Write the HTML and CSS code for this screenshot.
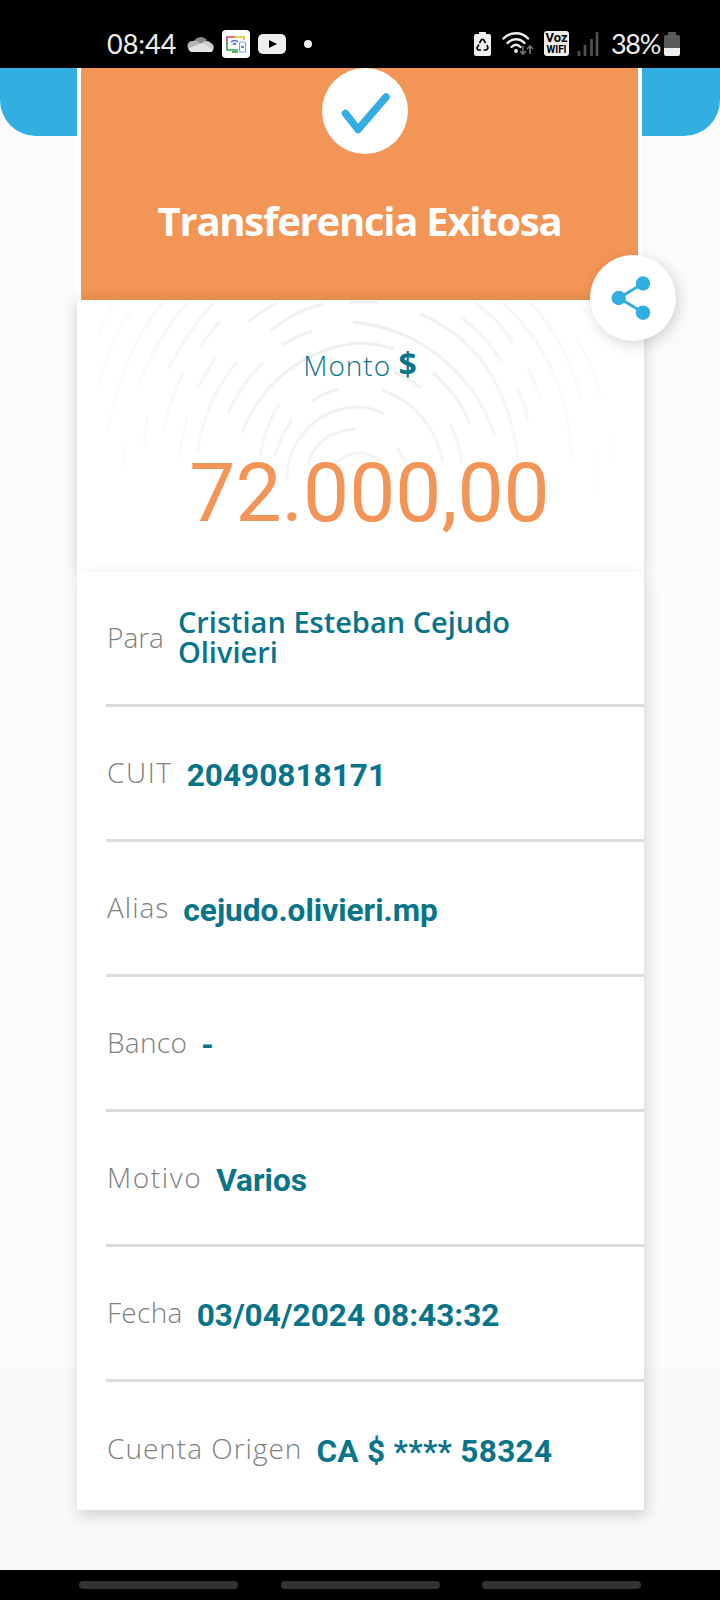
FILE: index.html
```
<!DOCTYPE html>
<html lang="es">
<head>
    <meta charset="UTF-8">
    <meta name="viewport" content="width=device-width, initial-scale=1.0">
    <title>Transferencia Exitosa</title>
    <link rel="stylesheet" href="styles.css">
</head>
<body>
    <div class="status-bar">
        <div class="status-left">
            <span class="clock">08:44</span>
            <svg class="ic-cloud" width="28" height="18" viewBox="0 0 28 18">
                <path d="M7 13a7 7 0 0 1 0-7A8 8 0 0 1 20 5l-5 5z" fill="#8b8b8b"/>
                <path d="M5 16a5 5 0 0 1 1-10c3-1 6 0 8 3l4 6z" fill="#b5b5b5"/>
                <path d="M15 8a6 6 0 0 1 9 0 5 5 0 0 1 0 9h-9z" fill="#cfcfcf"/>
                <path d="M4 17c-2-1-3-3-2-4l13-5 11 7c-1 2-2 2-4 2z" fill="#e4e4e4"/>
            </svg>
            <svg class="ic-cast" width="28" height="28" viewBox="0 0 28 28">
                <rect width="28" height="28" rx="4" fill="#fff"/>
                <g fill="none" stroke-width="1.7">
                    <path d="M5 14V7h8" stroke="#d9406a"/>
                    <path d="M12 7h10v3" stroke="#e8b52c"/>
                    <path d="M5 12v8h11" stroke="#35a853"/>
                    <path d="M10 22h6" stroke="#35a853"/>
                    <path d="M9 12c2-2 5-2 7 0M11 14.500c1-1 2-1 3 0" stroke="#4277d8"/>
                    <rect x="17.500" y="12" width="6" height="10" rx="1" stroke="#7aa5e6" stroke-width="1.200"/>
                    <path d="M19 17h3" stroke="#3f72d6"/>
                </g>
            </svg>
            <svg class="ic-video" width="28" height="20" viewBox="0 0 28 20">
                <rect width="28" height="20" rx="5" fill="#eee"/>
                <path d="M11 6l8 4-8 4z" fill="#000"/>
            </svg>
            <span class="dot"></span>
        </div>
        <div class="status-right">
            <svg width="17" height="24" viewBox="0 0 17 24">
                <path d="M5 0h7v2h3a2 2 0 0 1 2 2v18a2 2 0 0 1-2 2H2a2 2 0 0 1-2-2V4a2 2 0 0 1 2-2h3z" fill="#eee"/>
                <path d="M5.500 11l2-3.500h2l2 3.500M13 13l1 3-1.500 2h-3M7 18H4l-1.200-2L5 12.500" fill="none" stroke="#000" stroke-width="1.600"/>
            </svg>
            <svg class="ic-wifi" width="32" height="24" viewBox="0 0 32 24">
                <g fill="none" stroke="#eee" stroke-width="2.400" stroke-linecap="round">
                    <path d="M1.500 6.500C8-.5 20-.5 26 6.500"/>
                    <path d="M5.500 11c5-5 12-5 17 0"/>
                    <path d="M9.500 15c3-3 6-3 9 0"/>
                </g>
                <circle cx="14" cy="19" r="1.900" fill="#eee"/>
                <path d="M21 14v8m-3-3l3 3 3-3M28 22v-8m-3 3l3-3 3 3" fill="none" stroke="#777" stroke-width="1.600"/>
            </svg>
            <span class="voz">Voz<small>WIFI</small></span>
            <svg class="ic-signal" width="22" height="24" viewBox="0 0 22 24">
                <path d="M2 24v-5M8 24V13M14.500 24V7M20 24V0" fill="none" stroke="#505050" stroke-width="2.800"/>
            </svg>
            <span class="percent">38%</span>
            <svg width="16" height="24" viewBox="0 0 16 24">
                <path d="M4 0h8v3h2a2 2 0 0 1 2 2v11H0V5a2 2 0 0 1 2-2h2z" fill="#5a5a5a"/>
                <path d="M0 16h16v6a2 2 0 0 1-2 2H2a2 2 0 0 1-2-2z" fill="#eee"/>
            </svg>
        </div>
    </div>

    <div class="screen">
        <div class="top-bar"></div>

        <div class="ticket">
            <div class="ticket-header">
                <div class="check">
                    <svg width="86" height="86" viewBox="0 0 86 86">
                        <path d="M23.500 45.500L36 61.500 64 29" fill="none" stroke="#33aee0" stroke-width="7.500" stroke-linecap="round" stroke-linejoin="round"/>
                    </svg>
                </div>
                <h1>Transferencia Exitosa</h1>
            </div>

            <div class="amount-card">
                <!-- huella de fondo -->
                <svg class="fingerprint" width="567" height="272" viewBox="77 300 567 272">
                    <defs>
                        <radialGradient id="huella" gradientUnits="userSpaceOnUse" cx="358" cy="335" r="270">
                            <stop offset="0" stop-color="#eee"/>
                            <stop offset="0.350" stop-color="#f2f2f2"/>
                            <stop offset="0.700" stop-color="#f8f8f8"/>
                            <stop offset="1" stop-color="#fdfdfd"/>
                        </radialGradient>
                    </defs>
                    <g fill="none" stroke="url(#huella)" stroke-width="3">
                        <path d="M98 335Q105 318 115 303M99 390Q106 345 130 313M108 432Q118 360 162 303M138 387Q155 340 187 303M168 370Q187 332 213 303"/>
                        <path d="M200 346L220 321M164 430Q170 400 183 373M144 446L147 416M122 470L125 445M178 460L187 418M198 387L215 358"/>
                        <path d="M197 453Q205 400 237 362M228 413Q241 385 263 362M260 457Q264 428 279 404M275 457Q280 435 292 420"/>
                        <path d="M248 322Q262 311 277 303M271 330Q295 311 323 304M283 345Q296 336 312 331M349 302H378"/>
                        <path d="M242 433A138 138 0 0 1 357 343Q377 343 394 349M353 322A165 165 0 0 1 495 437"/>
                        <path d="M287 480A72 72 0 0 1 357 407Q371 407 384 414M308 463Q318 432 356 429M327 477A34 34 0 0 1 382 462M312 401Q325 392 339 389"/>
                        <path d="M382 390Q432 408 443 463M397 448L406 462M450 425Q460 444 462 464M394 372Q408 378 421 388M433 373Q458 395 470 423"/>
                        <path d="M420 314Q505 350 518 460M461 317Q485 335 502 362M475 303Q500 320 513 343M503 303Q570 365 571 460M531 303Q568 345 580 396"/>
                        <path d="M577 340Q596 370 600 397M528 368L542 399M517 387Q526 405 528 421M580 303L590 318M608 432Q612 450 611 465M594 450V495"/>
                    </g>
                </svg>
                <p class="monto">Monto <b>$</b></p>
                <p class="amount">72.000,00</p>
                <button class="share" aria-label="Compartir">
                    <svg width="40" height="46" viewBox="0 0 40 46">
                        <path d="M30 8.500L6 23 30 37.500" fill="none" stroke="#33aee0" stroke-width="3"/>
                        <g fill="#33aee0">
                            <circle cx="30" cy="8.500" r="7.200"/>
                            <circle cx="5.700" cy="23" r="7.200"/>
                            <circle cx="30" cy="37.700" r="7.200"/>
                        </g>
                    </svg>
                </button>
            </div>

            <div class="details">
                <div class="row"><span class="label narrow">Para</span><span class="value name">Cristian Esteban Cejudo Olivieri</span></div>
                <div class="row"><span class="label wider">CUIT</span><span class="value">20490818171</span></div>
                <div class="row"><span class="label wide">Alias</span><span class="value">cejudo.olivieri.mp</span></div>
                <div class="row"><span class="label">Banco</span><span class="value">-</span></div>
                <div class="row"><span class="label wider">Motivo</span><span class="value">Varios</span></div>
                <div class="row"><span class="label">Fecha</span><span class="value">03/04/2024 08:43:32</span></div>
                <div class="row"><span class="label wide">Cuenta Origen</span><span class="value account">CA $ **** 58324</span></div>
            </div>
        </div>
    </div>

    <div class="nav-bar">
        <span></span>
        <span></span>
        <span></span>
    </div>
</body>
</html>
```
FILE: styles.css
```
:root {
    --blue: #33aee0;
    --orange: #f39556;
    --teal: #08748a;
    --gray: #808080;
    --line: #dcdcdc;
}

* {
    box-sizing: border-box;
}

body {
    margin: 0;
    width: 720px;
    height: 1600px;
    display: flex;
    flex-direction: column;
    overflow: hidden;
    font-family: "Open Sans", "Noto Sans", sans-serif;
    background: #fbfbfb;
}

h1, p {
    margin: 0;
}

/* barra de estado */
.status-bar {
    height: 68px;
    padding: 20px 40px 0 107px;
    background: #000;
    color: #eee;
    display: flex;
    justify-content: space-between;
}

.status-left,
.status-right {
    height: 47px;
    display: flex;
    align-items: center;
}

.status-left svg,
.status-right svg {
    flex: none;
}

.clock,
.percent {
    font-family: Lato, sans-serif;
    font-size: 27px;
    line-height: 30px;
}

.clock {
    width: 80px;
}

.ic-cast {
    margin: 0 8px 0 7px;
}

.dot {
    width: 8px;
    height: 8px;
    margin-left: 18px;
    border-radius: 50%;
    background: #eee;
}

.ic-wifi {
    margin-left: 11px;
}

.voz {
    width: 25px;
    height: 25px;
    margin-left: 10px;
    padding-top: 1px;
    border-radius: 3px;
    background: #eee;
    color: #000;
    font: bold 13px/12px Roboto, sans-serif;
    text-align: center;
}

.voz small {
    display: block;
    font-size: 10px;
    line-height: 11px;
}

.ic-signal {
    margin: 0 12px 0 8px;
}

.percent {
    width: 53px;
    letter-spacing: -1.3px;
}

/* contenido */
.screen {
    height: 1502px;
    background: linear-gradient(#fbfbfb 1300px, #f9f9f9 1300px);
}

.top-bar {
    height: 68px;
    border-radius: 0 0 36px 36px;
    background: var(--blue);
}

.ticket {
    width: 567px;
    margin: -68px 0 0 77px;
}

.ticket-header {
    width: 565px;
    height: 232px;
    padding-left: 5px;
    border: solid #fff;
    border-width: 0 4px;
    background: var(--orange);
    display: flex;
    flex-direction: column;
    align-items: center;
}

.check {
    width: 86px;
    height: 86px;
    margin-left: 6px;
    border-radius: 50%;
    background: #fff;
}

.ticket-header h1 {
    margin: 39px 5px 0 0;
    color: #fff;
    font-size: 40px;
    font-weight: 700;
    line-height: 56px;
    letter-spacing: -1.25px;
    white-space: nowrap;
}

.amount-card {
    position: relative;
    height: 272px;
    background: #fff;
    box-shadow: 0 2px 14px rgba(0, 0, 0, 0.18);
    text-align: center;
}

.fingerprint {
    position: absolute;
    top: 0;
    left: 0;
}

.monto {
    position: relative;
    padding-top: 44px;
    color: var(--teal);
    font-size: 28px;
    font-weight: 300;
    line-height: 40px;
    letter-spacing: 1px;
}

.monto b {
    margin-left: -1px;
    font-size: 32px;
    font-weight: 700;
}

.amount {
    position: relative;
    padding: 60px 0 0 18px;
    color: var(--orange);
    font-family: Roboto, sans-serif;
    font-size: 82px;
    line-height: 96px;
}

.share {
    position: absolute;
    top: -45px;
    right: -32px;
    width: 86px;
    height: 86px;
    padding: 0;
    border: 0;
    border-radius: 50%;
    background: #fff;
    box-shadow: 3px 4px 14px rgba(0, 0, 0, 0.16);
    display: flex;
    align-items: center;
    justify-content: center;
}

.share svg {
    overflow: visible;
}

.details {
    position: relative;
    padding-left: 29px;
    background: #fff;
    box-shadow: 2px 6px 14px rgba(0, 0, 0, 0.16);
}

.row {
    height: 135px;
    padding: 0 0 1px 1px;
    border-bottom: 3px solid var(--line);
    display: flex;
    align-items: center;
    gap: 14px;
}

.row:last-child {
    height: 128px;
    padding: 5px 0 0 1px;
    border-bottom: 0;
}

.label {
    padding-bottom: 2px;
    color: var(--gray);
    font-size: 28px;
    font-weight: 300;
    line-height: 30px;
    letter-spacing: 0.3px;
    white-space: nowrap;
}

.narrow {
    letter-spacing: 0;
}

.wide {
    letter-spacing: 1px;
}

.wider {
    letter-spacing: 1.6px;
}

.value {
    padding-top: 6px;
    color: var(--teal);
    font-family: Roboto, sans-serif;
    font-size: 31.6px;
    font-weight: 700;
    line-height: 30px;
}

.account {
    letter-spacing: 0.3px;
}

.name {
    width: 350px;
    padding: 0 0 2px;
    font-family: "Open Sans", sans-serif;
    font-size: 29px;
    font-weight: 650;
}

/* botones del sistema */
.nav-bar {
    height: 30px;
    padding: 11px 79px 0;
    background: #000;
    display: flex;
    justify-content: space-between;
    flex: none;
}

.nav-bar span {
    width: 159px;
    height: 8px;
    border-radius: 4px;
    background: #333;
}
```
